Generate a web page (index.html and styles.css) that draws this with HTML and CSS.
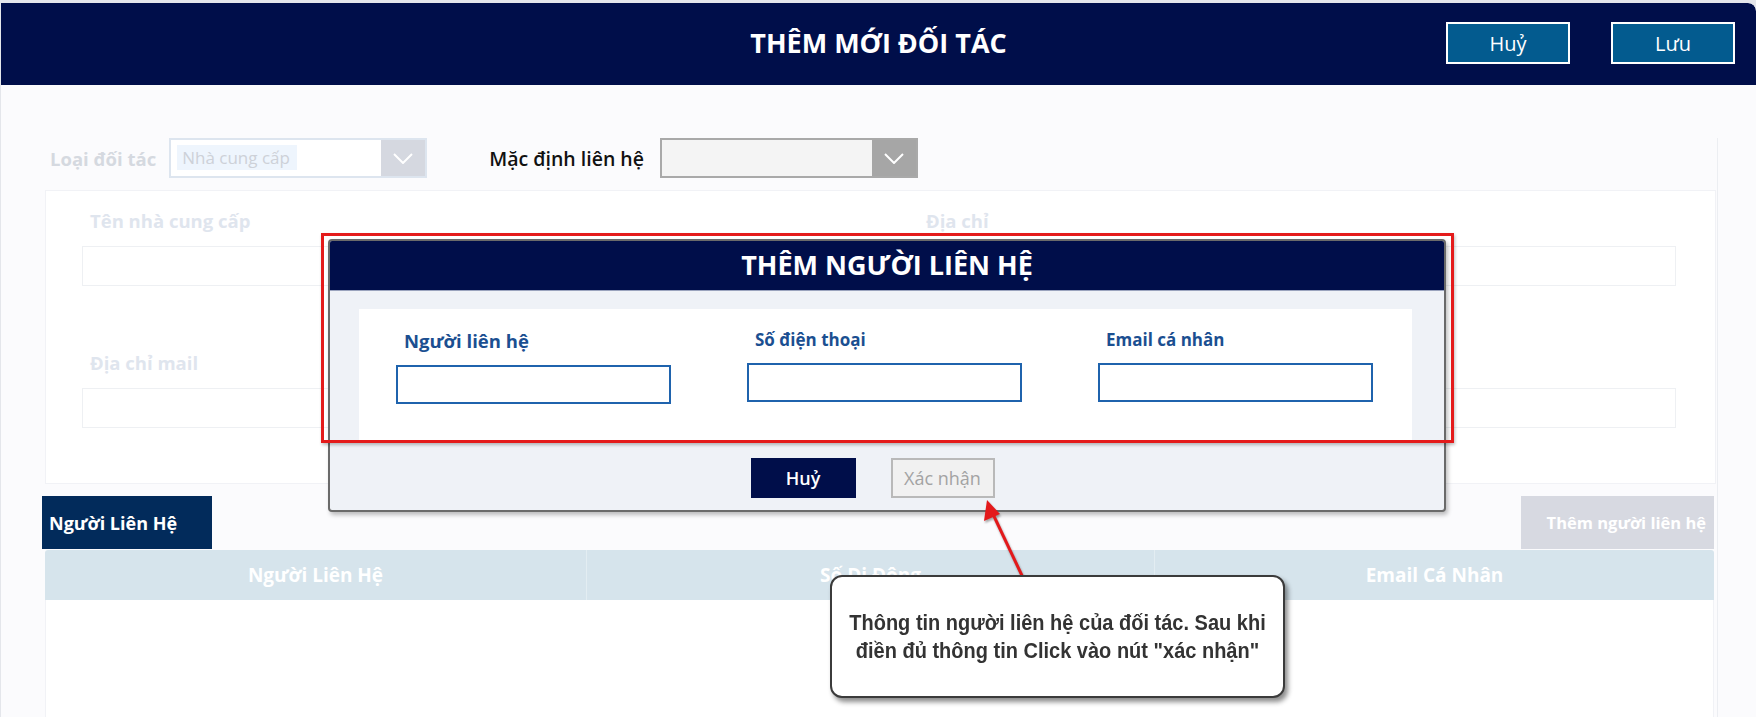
FILE: index.html
```html
<!DOCTYPE html>
<html>
<head>
    <meta charset="UTF-8">
    <meta name="viewport" content="width=device-width, initial-scale=1.0">
    <link rel="stylesheet" href="styles.css">
</head>
<body>
    <div class="page">
        <div class="topbar">
            <h1 class="topbar-title">THÊM MỚI ĐỐI TÁC</h1>
            <div class="topbar-actions">
                <button class="top-btn">Huỷ</button>
                <button class="top-btn">Lưu</button>
            </div>
        </div>

        <div class="content">
            <div class="filters">
                <span class="filter-label faded">Loại đối tác</span>
                <div class="select select-faded">
                    <span class="select-value">Nhà cung cấp</span>
                    <span class="select-arrow">
                        <svg width="20" height="11" viewBox="0 0 20 11"><path d="M1 1 L10 10 L19 1" fill="none" stroke="#fff" stroke-width="2"/></svg>
                    </span>
                </div>
                <span class="filter-label dark">Mặc định liên hệ</span>
                <div class="select select-gray">
                    <span class="select-value"></span>
                    <span class="select-arrow">
                        <svg width="20" height="11" viewBox="0 0 20 11"><path d="M1 1 L10 10 L19 1" fill="none" stroke="#fff" stroke-width="2"/></svg>
                    </span>
                </div>
            </div>

            <div class="card">
                <div class="field">
                    <label>Tên nhà cung cấp</label>
                    <div class="field-input"></div>
                </div>
                <div class="field">
                    <label>Địa chỉ</label>
                    <div class="field-input"></div>
                </div>
                <div class="field">
                    <label>Địa chỉ mail</label>
                    <div class="field-input"></div>
                </div>
                <div class="field">
                    <label></label>
                    <div class="field-input"></div>
                </div>
            </div>

            <div class="tabs">
                <div class="tab">Người Liên Hệ</div>
                <div class="add-btn">Thêm người liên hệ</div>
            </div>

            <div class="table">
                <div class="table-head">
                    <div class="th">Người Liên Hệ</div>
                    <div class="th">Số Di Động</div>
                    <div class="th">Email Cá Nhân</div>
                </div>
                <div class="table-body"></div>
            </div>
        </div>

        <!-- popup -->
        <div class="modal">
            <div class="modal-head">THÊM NGƯỜI LIÊN HỆ</div>
            <div class="modal-body">
                <div class="modal-panel">
                    <div class="m-field">
                        <label class="m-label big">Người liên hệ</label>
                        <div class="m-input"></div>
                    </div>
                    <div class="m-field">
                        <label class="m-label">Số điện thoại</label>
                        <div class="m-input"></div>
                    </div>
                    <div class="m-field">
                        <label class="m-label">Email cá nhân</label>
                        <div class="m-input"></div>
                    </div>
                </div>
                <div class="modal-foot">
                    <button class="m-btn m-cancel">Huỷ</button>
                    <button class="m-btn m-ok">Xác nhận</button>
                </div>
            </div>
        </div>
        <div class="highlight"></div>

        <svg class="pointer" width="80" height="100" viewBox="0 0 80 100">
            <line x1="58" y1="94" x2="25" y2="24" stroke="#e3191b" stroke-width="3"/>
            <polygon points="20,12 17,33 33,26" fill="#e3191b"/>
        </svg>

        <div class="callout">
            <span class="callout-text">Thông tin người liên hệ của đối tác. Sau khi<br>
            điền đủ thông tin Click vào nút "xác nhận"</span>
        </div>
    </div>
</body>
</html>
```

FILE: styles.css
```css
* {
    margin: 0;
    padding: 0;
    box-sizing: border-box;
    font-family: "Open Sans", "Noto Sans", sans-serif;
}

body {
    background: #e4e6eb;
    overflow: hidden;
}

.page {
    position: relative;
    height: 714px;
    margin-top: 3px;
    margin-left: 1px;
    background: #fbfbfd;
    border-top-right-radius: 8px;
    overflow: hidden;
}

.topbar {
    height: 82px;
    background: #000e4a;
    border-top-right-radius: 8px;
    display: flex;
    align-items: center;
    justify-content: center;
    position: relative;
}

.topbar-title {
    color: #fff;
    font-size: 27px;
    font-weight: 700;
    margin-top: -3px;
}

.topbar-actions {
    position: absolute;
    right: 21px;
    top: 19px;
    display: flex;
    gap: 41px;
}

.top-btn {
    width: 124px;
    height: 42px;
    background: #035b8f;
    border: 2px solid #fff;
    color: #fff;
    font-size: 20px;
    font-family: "Open Sans", sans-serif;
}

.content {
    width: 1717px;
    height: 632px;
    border-right: 1px solid #eceef2;
    padding-left: 44px;
}

.filters {
    display: flex;
    align-items: center;
    height: 40px;
    margin-top: 53px;
    padding-left: 5px;
}

.filter-label {
    font-size: 18.5px;
    font-weight: 700;
    margin-right: 13px;
}

.filter-label.faded {
    color: #d5d9e0;
}

.filter-label.dark {
    color: #111;
    font-size: 19.5px;
    font-weight: 600;
    margin-left: 62px;
    margin-right: 16px;
}

.select {
    width: 258px;
    height: 40px;
    display: flex;
    border: 2px solid;
}

.select-value {
    flex: 1;
    display: flex;
    align-items: center;
}

.select-arrow {
    width: 44px;
    display: flex;
    align-items: center;
    justify-content: center;
}

.select-faded {
    border-color: #dde5ef;
    background: #fff;
}

.select-faded .select-value {
    flex: none;
    width: 120px;
    margin: 5px auto 6px 6px;
    padding: 0 5px;
    font-size: 17px;
    color: #cdd1d8;
    background: #eef5fd;
}

.select-faded .select-arrow {
    background: #d5d8e0;
}

.select-gray {
    border-color: #a9a9a9;
    background: #f4f4f4;
}

.select-gray .select-arrow {
    background: #a6a6a6;
}

.card {
    width: 1671px;
    height: 294px;
    margin-top: 12px;
    background: #fff;
    border: 1px solid #f1f2f6;
    padding: 18px 40px 0 36px;
    display: grid;
    grid-template-columns: 758px 758px;
    column-gap: 78px;
    row-gap: 65px;
    align-content: start;
}

.field label {
    display: block;
    height: 24px;
    font-size: 18.5px;
    font-weight: 700;
    color: #dfe5ee;
    padding-left: 8px;
    margin-bottom: 13px;
    line-height: 24px;
}

.field-input {
    height: 40px;
    border: 1px solid #eef0f3;
    background: #fff;
}

.tabs {
    display: flex;
    justify-content: space-between;
    align-items: flex-end;
    margin-top: 12px;
    margin-left: -3px;
    padding-right: 3px;
}

.tab {
    width: 170px;
    height: 53px;
    background: #022b5b;
    color: #fff;
    font-size: 18px;
    font-weight: 700;
    padding-left: 7px;
    display: flex;
    align-items: center;
}

.add-btn {
    width: 193px;
    height: 53px;
    background: #d7d9e1;
    color: #fff;
    font-size: 16.5px;
    font-weight: 700;
    display: flex;
    align-items: center;
    justify-content: flex-end;
    padding-right: 8px;
}

.table {
    width: 1669px;
    margin-top: 1px;
}

.table-head {
    display: grid;
    grid-template-columns: 541px 568px 1fr;
    height: 50px;
    background: #d6e4ec;
    border-radius: 3px 3px 0 0;
}

.th {
    display: flex;
    align-items: center;
    justify-content: center;
    color: #fff;
    font-size: 19px;
    font-weight: 700;
    border-left: 1px solid #e3edf2;
}

.th:first-child {
    border-left: none;
}

.table-body {
    height: 120px;
    background: #fff;
    border-left: 1px solid #f1f2f6;
    border-right: 1px solid #f1f2f6;
}

/* popup */
.modal {
    position: absolute;
    left: 327px;
    top: 236px;
    width: 1118px;
    height: 273px;
    background: #eff2f7;
    border: 2px solid #6a6a6a;
    border-radius: 4px;
    box-shadow: 2px 3px 4px rgba(0, 0, 0, 0.25);
    overflow: hidden;
}

.modal-head {
    height: 50px;
    background: #000e4a;
    color: #fff;
    font-size: 27px;
    font-weight: 700;
    text-align: center;
    line-height: 48px;
    border-bottom: 1px solid #9aa3bd;
}

.modal-body {
    padding: 18px 32px 0 29px;
}

.modal-panel {
    height: 133px;
    background: #fff;
    display: flex;
    gap: 76px;
    padding-left: 37px;
}

.m-field {
    width: 275px;
    display: flex;
    flex-direction: column;
}

.m-label {
    color: #1b4f91;
    font-size: 17px;
    font-weight: 700;
    height: 54px;
    padding: 19px 0 0 8px;
}

.m-label.big {
    font-size: 18.5px;
    height: 56px;
    padding-top: 19px;
}

.m-input {
    height: 39px;
    border: 2px solid #1f63ad;
    background: #fff;
}

.modal-foot {
    display: flex;
    justify-content: center;
    gap: 35px;
    margin-top: 16px;
    padding-right: 26px;
}

.m-btn {
    height: 40px;
    font-size: 18px;
    font-family: "Open Sans", sans-serif;
}

.m-cancel {
    width: 105px;
    background: #000e4a;
    color: #fff;
    border: none;
    font-weight: 600;
}

.m-ok {
    width: 104px;
    background: #f1f1f1;
    color: #a3a3a3;
    border: 2px solid #b9b9b9;
}

.highlight {
    position: absolute;
    left: 320px;
    top: 230px;
    width: 1133px;
    height: 210px;
    border: 3px solid #e41b1b;
    box-shadow: 1px 2px 3px rgba(0, 0, 0, 0.25);
}

.pointer {
    position: absolute;
    left: 966px;
    top: 485px;
    filter: drop-shadow(1px 2px 1px rgba(0, 0, 0, 0.35));
}

.callout {
    position: absolute;
    left: 829px;
    top: 572px;
    width: 455px;
    height: 123px;
    background: #fff;
    border: 2px solid #3b3b3b;
    border-radius: 12px;
    box-shadow: 3px 4px 5px rgba(0, 0, 0, 0.45);
    display: flex;
    align-items: center;
    justify-content: center;
    text-align: center;
    font-family: "Liberation Sans Narrow", "Liberation Sans", Arial, sans-serif;
    font-weight: 700;
    font-size: 20px;
    line-height: 25px;
    color: #333;
}

.callout-text {
    display: inline-block;
    font-family: inherit;
    transform: scaleY(1.12);
}
```
